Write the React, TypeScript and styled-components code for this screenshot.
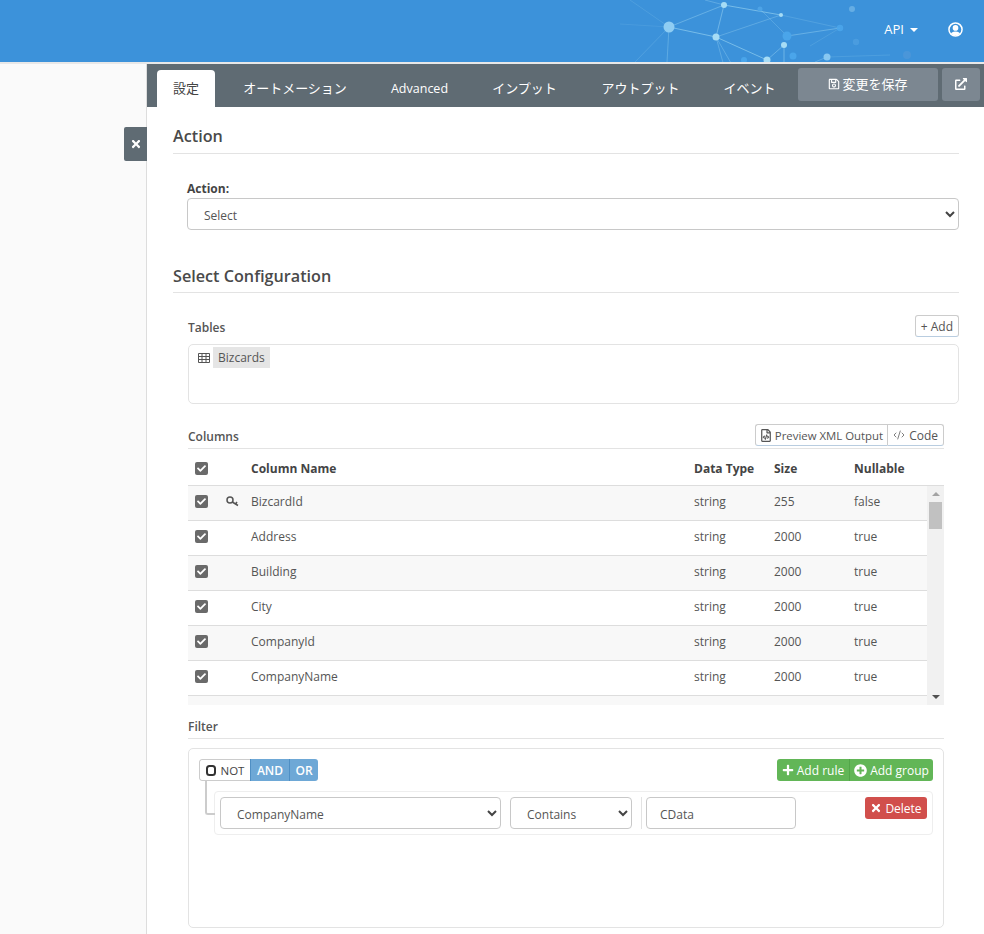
import React from "react";
import styled, { createGlobalStyle } from "styled-components";
import { FaCheck, FaPlus, FaPlusCircle, FaTimes, FaRegSave, FaExternalLinkAlt, FaRegFileCode } from "react-icons/fa";
import { CodeXml } from "lucide-react";

const Global = createGlobalStyle`
  html, body { margin: 0; padding: 0; background: #fff; }
  body { font-family: "Open Sans", "Noto Sans CJK JP", sans-serif; font-size: 12px; color: #555; }
  * { box-sizing: border-box; }
`;
const Page = styled.div`width: 984px; height: 934px; overflow: hidden; display: flex; flex-direction: column;`;
const Header = styled.header`
  position: relative; height: 64px; flex: none; background: #3c92da; border-bottom: 2px solid #e8e8e8;
  display: flex; justify-content: flex-end; align-items: center; padding: 0 21px 4px 0; color: #fff; gap: 30px; overflow: hidden;
`;
const Network = styled.svg`position: absolute; left: 620px; top: 0; width: 320px; height: 62px;`;
const ApiMenu = styled.span`position: relative; font-size: 13px; display: flex; align-items: center; gap: 6px;`;
const Caret = styled.i`width: 0; height: 0; border-left: 4px solid transparent; border-right: 4px solid transparent; border-top: 4px solid #fff; margin-top: 2px;`;
const UserIcon = styled.svg`position: relative; display: block; width: 15px; height: 15px;`;
const Body = styled.div`flex: 1; display: flex; min-height: 0;`;
const Side = styled.aside`position: relative; width: 147px; flex: none; background: #fafafa; border-right: 1px solid #ddd;`;
const CloseTab = styled.button`
  position: absolute; top: 63px; right: -1px; width: 23px; height: 34px; border: 0; background: #5f6b73; color: #fff; padding: 0;
  display: flex; align-items: center; justify-content: center; font-size: 12px; border-radius: 2px 0 0 2px;
`;
const Main = styled.main`flex: 1; min-width: 0; background: #fff;`;
const TabBar = styled.nav`height: 43px; background: #5f6b73; display: flex; align-items: flex-end; padding-left: 10px; position: relative;`;
const Tab = styled.div<{ $active?: boolean; $w: number; $latin?: boolean }>`
  width: ${p => p.$w}px; height: 37px; display: flex; align-items: center; justify-content: center; padding-bottom: ${p => p.$latin ? 0 : 2}px;
  font-size: ${p => p.$latin ? 12.5 : 13}px; color: ${p => p.$active ? "#444" : "#fff"}; background: ${p => p.$active ? "#fff" : "transparent"};
  border-radius: 4px 4px 0 0;
`;
const TabActions = styled.div`position: absolute; right: 4px; top: 4px; display: flex; gap: 4px;`;
const GreyBtn = styled.button<{ $w: number }>`
  width: ${p => p.$w}px; height: 33px; border: 0; border-radius: 3px; background: #7c8791; color: #fff; font: inherit; font-size: 13px;
  display: flex; align-items: center; justify-content: center; gap: 2px; padding: 0 0 2px;
`;
const Content = styled.div`padding: 0 25px 0 26px;`;
const SectionTitle = styled.h2<{ $mt: number; $lh: number }>`
  margin: ${p => p.$mt}px 0 0; height: 30px; font-size: 16.2px; font-weight: 600; color: #4a4a4a; line-height: ${p => p.$lh}px; border-bottom: 1px solid #e3e3e3;
`;
const Indent = styled.div<{ $left: number }>`padding-left: ${p => p.$left}px;`;
const FieldLabel = styled.label`display: block; margin-top: 27px; height: 17px; line-height: 15px; font-size: 12px; font-weight: 700; color: #444;`;
const Select = styled.div<{ $w: number }>`
  position: relative; width: ${p => p.$w}px; height: 32px; border: 1px solid #c8c8c8; border-radius: 4px; background: #fff;
  padding: 2px 0 0 16px; display: flex; align-items: center; font-size: 12px; color: #555; flex: none;
`;
const Chevron = styled.svg`position: absolute; right: 3px; top: 50%; margin-top: -4px; width: 10px; height: 8px;`;
const SubHead = styled.div<{ $mt: number; $h: number; $line?: boolean }>`
  margin-top: ${p => p.$mt}px; height: ${p => p.$h}px;
  display: flex; justify-content: space-between; align-items: flex-end; font-size: 12px; font-weight: 600; color: #555;
  border-bottom: ${p => p.$line ? "1px solid #e3e3e3" : "0"};
`;
const SubTitle = styled.span<{ $pb: number }>`line-height: 17px; padding-bottom: ${p => p.$pb}px;`;
const SmallBtn = styled.div<{ $small?: boolean }>`
  height: 22px; padding: 0 ${p => p.$small ? 4 : 5}px 0 5px; display: flex; align-items: center; gap: ${p => p.$small ? 4 : 3}px; font-size: ${p => p.$small ? 11.4 : 12}px; font-weight: 400; color: #555; background: #fff;
  border: 1px solid #ccc; border-bottom-color: #b9cde0;
  &:first-child:not(:last-child) { border-radius: 3px 0 0 3px; border-right: 0; }
  &:last-child:not(:first-child) { border-radius: 0 3px 3px 0; padding-right: 5px; font-size: 12px; }
  &:only-child { border-radius: 3px; }
`;
const FileIcon = styled(FaRegFileCode)`width: 10px; height: 13px; flex: none;`;
const BtnGroup = styled.div<{ $mb: number }>`display: flex; margin-bottom: ${p => p.$mb}px;`;
const TablesBox = styled.div`
  margin-top: 6px; height: 60px; border: 1px solid #e3e3e3; border-radius: 5px; padding: 2px 0 0 9px; display: flex; align-items: flex-start; gap: 3px;
`;
const TableIcon = styled.svg`width: 12px; height: 10px; margin-top: 6px; flex: none;`;
const Chip = styled.span`background: #e5e5e5; height: 21px; line-height: 22px; padding: 0 5px; font-size: 12px; color: #555;`;
const TableWrap = styled.div`width: 756px;`;
const HeadRow = styled.div`
  display: grid; grid-template-columns: 38px 25px 443px 80px 80px 90px; height: 37px; align-items: center; padding-top: 2px; border-bottom: 1px solid #ddd;
  font-size: 12px; font-weight: 700; color: #444;
`;
const Checkbox = styled.span`
  width: 13px; height: 13px; border-radius: 2px; background: #6a6a6a; color: #fff; display: flex; align-items: center; justify-content: center; font-size: 9px; margin-left: 7px;
`;
const Scroller = styled.div`display: flex; height: 219px; overflow: hidden;`;
const Rows = styled.div`flex: 1; min-width: 0; background: #f8f8f8;`;
const Row = styled.div<{ $odd: boolean }>`
  display: grid; grid-template-columns: 38px 25px 443px 80px 80px 73px; height: 35px; align-items: center; padding-bottom: 3px;
  border-bottom: 1px solid #ddd; background: ${p => p.$odd ? "#f8f8f8" : "#fff"}; font-size: 12px; color: #555;
`;
const KeyIcon = styled.svg`display: block; width: 13px; height: 11px;`;
const Scrollbar = styled.div`width: 17px; flex: none; background: #f1f1f1; display: flex; flex-direction: column; align-items: center;`;
const ArrowUp = styled.i`margin-top: 6px; width: 0; height: 0; border-left: 4px solid transparent; border-right: 4px solid transparent; border-bottom: 4px solid #a3a3a3;`;
const ArrowDown = styled.i`margin-top: auto; margin-bottom: 6px; width: 0; height: 0; border-left: 4px solid transparent; border-right: 4px solid transparent; border-top: 4px solid #505050;`;
const Thumb = styled.i`width: 13px; height: 27px; margin-top: 6px; background: #c1c1c1;`;
const FilterBox = styled.div`
  margin-top: 9px; height: 180px; border: 1px solid #e3e3e3; border-radius: 5px; padding: 10px 10px 0 10px;
`;
const FilterTop = styled.div`display: flex; justify-content: space-between; align-items: flex-start;`;
const Conj = styled.div`display: flex; height: 22px; border-radius: 3px; overflow: hidden; font-size: 12px;`;
const NotBtn = styled.div`
  width: 51px; display: flex; align-items: center; justify-content: center; gap: 5px; background: #fff; border: 1px solid #ccc; border-right: 0; border-radius: 3px 0 0 3px; color: #444; font-size: 11.5px;
`;
const Ring = styled.i`width: 10px; height: 11px; border: 2px solid #333; border-radius: 3.5px; display: block;`;
const ConjBtn = styled.div<{ $w: number }>`
  width: ${p => p.$w}px; display: flex; align-items: center; justify-content: center; background: #6ea8d6; color: #fff; font-weight: 600; border-left: 1px solid #4f8fc4;
  &:first-of-type { border-left: 0; }
`;
const GreenGroup = styled.div`display: flex; height: 22px; background: #62b657; border-radius: 3px; color: #fff; font-size: 12px;`;
const GreenBtn = styled.div<{ $w: number }>`
  width: ${p => p.$w}px; display: flex; align-items: center; justify-content: center; gap: 3px; & + & { border-left: 1px solid #52a648; }
`;
const RuleRow = styled.div`position: relative; margin: 10px 0 0 15px; width: 719px; height: 44px; border: 1px solid #eee; border-radius: 4px; padding: 5px; display: flex; align-items: flex-start; gap: 9px;`;
const Connector = styled.i`position: absolute; left: -10px; top: -11px; width: 10px; height: 34px; border-left: 2px solid #ccc; border-bottom: 2px solid #ccc; border-radius: 0 0 0 3px;`;
const Divider = styled.i`width: 1px; height: 32px; background: #e3e3e3; margin-right: -5px; flex: none;`;
const TextInput = styled.div`width: 150px; height: 32px; border: 1px solid #c8c8c8; border-radius: 4px; padding: 2px 0 0 13px; display: flex; align-items: center; font-size: 12px; color: #555; flex: none;`;
const DeleteBtn = styled.div`
  position: absolute; right: 5px; top: 5px; width: 62px; height: 22px; border-radius: 3px; background: #d14f4c; color: #fff; font-size: 12px;
  display: flex; align-items: center; justify-content: center; gap: 3px;
`;

const data = [
  ["BizcardId", "255", "false"], ["Address", "2000", "true"], ["Building", "2000", "true"], ["City", "2000", "true"],
  ["CompanyId", "2000", "true"], ["CompanyName", "2000", "true"],
];
const nodes: [number, number, number, string, number][] = [
  [49, 27, 5.5, "#8fcdf3", 1], [104, 5, 3, "#a6dcf5", 1], [161, 15, 2, "#a6dcf5", 1], [96, 37, 3.5, "#a6dcf5", 1], [140, 9, 2.5, "#4da3e6", 1],
  [167, 36, 4.5, "#4aa5ea", 1], [164, 45, 3, "#a6dcf5", 1], [220, 28, 3.2, "#4aa5ea", 0.9], [232, 9, 3, "#6fb4e6", 0.8], [147, 60, 3.5, "#a6dcf5", 1],
  [173, 56, 3.5, "#4aa5ea", 1], [207, 57, 3.5, "#8fcdf3", 0.9], [124, 60, 3, "#4aa5ea", 1], [236, 42, 3.2, "#4e9fe0", 0.8], [287, 55, 4, "#4e97d8", 0.8],
  [277, 33, 3.5, "#4296dc", 0.7],
];
const lines: [number, number, number, number, number][] = [
  [49, 27, 104, 5, 0.5], [104, 5, 161, 15, 0.7], [104, 5, 96, 37, 0.6], [49, 27, 96, 37, 0.7], [96, 37, 161, 15, 0.4], [96, 37, 147, 60, 0.7], [96, 37, 115, 70, 0.4], [96, 37, 105, 70, 0.4],
  [49, 27, 47, 62, 0.4], [49, 27, 15, 62, 0.25], [49, 27, 0, 24, 0.15], [49, 27, 10, 0, 0.2], [104, 5, 85, 0, 0.4], [140, 9, 167, 36, 0.3], [161, 15, 220, 28, 0.25], [167, 36, 220, 28, 0.5],
  [164, 45, 147, 60, 0.5], [164, 45, 164, 62, 0.6], [207, 57, 270, 55, 0.2], [207, 57, 195, 62, 0.4], [220, 28, 190, 46, 0.2],
];
const Chev = () => (
  <Chevron viewBox="0 0 10 8"><path d="M1 2l4 4 4-4" fill="none" stroke="#444" strokeWidth="2" /></Chevron>
);

export default function App() {
  return (
    <Page>
      <Global />
      <Header>
        <Network viewBox="0 0 320 62">
          {lines.map((l, i) => <line key={i} x1={l[0]} y1={l[1]} x2={l[2]} y2={l[3]} stroke="#a6dcf5" strokeOpacity={l[4]} strokeWidth={0.8} />)}
          {nodes.map((n, i) => <circle key={i} cx={n[0]} cy={n[1]} r={n[2]} fill={n[3]} opacity={n[4]} />)}
        </Network>
        <ApiMenu>API<Caret /></ApiMenu>
        <UserIcon viewBox="0 0 16 16">
          <defs><clipPath id="uc"><circle cx="8" cy="8" r="6.4" /></clipPath></defs>
          <circle cx="8" cy="8" r="7" fill="none" stroke="#fff" strokeWidth="1.6" />
          <circle cx="8" cy="6.3" r="3" fill="#fff" />
          <ellipse cx="8" cy="14" rx="5.4" ry="3.8" fill="#fff" clipPath="url(#uc)" />
        </UserIcon>
      </Header>
      <Body>
        <Side><CloseTab><FaTimes /></CloseTab></Side>
        <Main>
          <TabBar>
            <Tab $active $w={58}>設定</Tab>
            <Tab $w={160}>オートメーション</Tab>
            <Tab $w={89} $latin>Advanced</Tab>
            <Tab $w={121}>インプット</Tab>
            <Tab $w={111}>アウトプット</Tab>
            <Tab $w={107}>イベント</Tab>
            <TabActions>
              <GreyBtn $w={140}><FaRegSave size={12} />変更を保存</GreyBtn>
              <GreyBtn $w={38}><FaExternalLinkAlt size={12} /></GreyBtn>
            </TabActions>
          </TabBar>
          <Content>
            <SectionTitle $mt={17} $lh={25}>Action</SectionTitle>
            <Indent $left={14}>
              <FieldLabel>Action:</FieldLabel>
              <Select $w={772}>Select<Chev /></Select>
            </Indent>
            <SectionTitle $mt={33} $lh={26}>Select Configuration</SectionTitle>
            <Indent $left={15}>
              <SubHead $mt={22} $h={23}>
                <SubTitle $pb={2}>Tables</SubTitle>
                <BtnGroup $mb={1}><SmallBtn>+ Add</SmallBtn></BtnGroup>
              </SubHead>
              <TablesBox>
                <TableIcon viewBox="0 0 12 10">
                  <path d="M.5.5h11v9H.5zM.5 3.5h11M.5 6.5h11M4 .5v9M8 .5v9" fill="none" stroke="#555" strokeWidth="1" />
                </TableIcon>
                <Chip>Bizcards</Chip>
              </TablesBox>
              <TableWrap>
                <SubHead $mt={20} $h={25} $line>
                  <SubTitle $pb={3}>Columns</SubTitle>
                  <BtnGroup $mb={2}>
                    <SmallBtn $small><FileIcon />Preview XML Output</SmallBtn>
                    <SmallBtn $small><CodeXml size={12} strokeWidth={1.5} />Code</SmallBtn>
                  </BtnGroup>
                </SubHead>
                <HeadRow>
                  <Checkbox><FaCheck /></Checkbox><span />
                  <span>Column Name</span><span>Data Type</span><span>Size</span><span>Nullable</span>
                </HeadRow>
                <Scroller>
                  <Rows>
                    {data.map((d, i) => (
                      <Row key={d[0]} $odd={i % 2 === 0}>
                        <Checkbox><FaCheck /></Checkbox>
                        <span>{i === 0 && (
                          <KeyIcon viewBox="0 0 13 11">
                            <circle cx="4" cy="4" r="3" fill="none" stroke="#555" strokeWidth="1.5" />
                            <path d="M6.3 6l5.7 3.5M9.5 8l1.5-2" fill="none" stroke="#555" strokeWidth="1.5" />
                          </KeyIcon>
                        )}</span>
                        <span>{d[0]}</span><span>string</span><span>{d[1]}</span><span>{d[2]}</span>
                      </Row>
                    ))}
                  </Rows>
                  <Scrollbar><ArrowUp /><Thumb /><ArrowDown /></Scrollbar>
                </Scroller>
                <SubHead $mt={13} $h={21} $line><SubTitle $pb={3}>Filter</SubTitle></SubHead>
                <FilterBox>
                  <FilterTop>
                    <Conj>
                      <NotBtn><Ring />NOT</NotBtn>
                      <ConjBtn $w={39}>AND</ConjBtn>
                      <ConjBtn $w={29}>OR</ConjBtn>
                    </Conj>
                    <GreenGroup>
                      <GreenBtn $w={72}><FaPlus size={12} />Add rule</GreenBtn>
                      <GreenBtn $w={84}><FaPlusCircle size={13} />Add group</GreenBtn>
                    </GreenGroup>
                  </FilterTop>
                  <RuleRow>
                    <Connector />
                    <Select $w={281}>CompanyName<Chev /></Select>
                    <Select $w={122}>Contains<Chev /></Select>
                    <Divider />
                    <TextInput>CData</TextInput>
                    <DeleteBtn><FaTimes size={12} />Delete</DeleteBtn>
                  </RuleRow>
                </FilterBox>
              </TableWrap>
            </Indent>
          </Content>
        </Main>
      </Body>
    </Page>
  );
}
